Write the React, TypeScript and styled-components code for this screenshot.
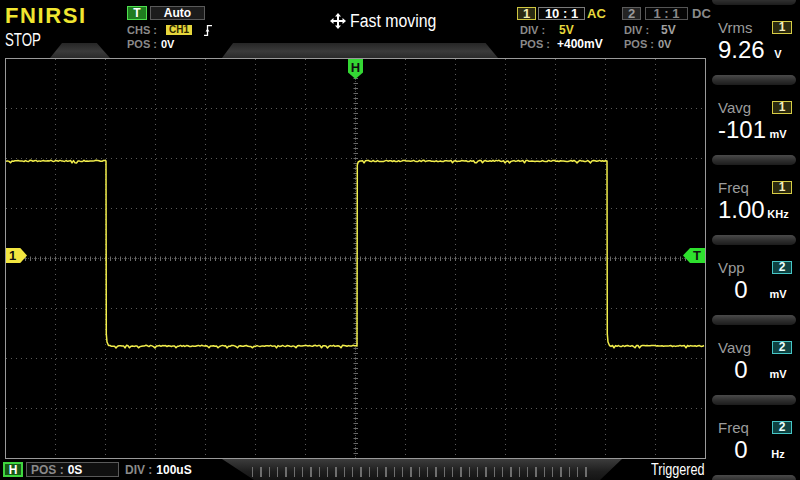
import React from "react";
import styled, { createGlobalStyle } from "styled-components";

const Global = createGlobalStyle`
  html, body { margin: 0; padding: 0; background: #000; }
  body { width: 800px; height: 480px; overflow: hidden; font-family: "Liberation Sans", Arial, sans-serif; }
  * { box-sizing: border-box; }
`;

const Screen = styled.div`
  width: 800px;
  height: 480px;
  display: flex;
  background: #000;
  color: #fff;
  overflow: hidden;
`;

const Main = styled.div`
  width: 711px;
  display: flex;
  flex-direction: column;
`;

/* ---------- header ---------- */
const Header = styled.header`
  position: relative;
  height: 58px;
`;

const Decor = styled.div`
  position: absolute;
  left: 0;
  bottom: 0;
  height: 15px;
  width: 100%;
  display: flex;
  z-index: 0;
`;

const Trap = styled.div<{ $ml: number; $w: number; $clip: string }>`
  margin-left: ${(p) => p.$ml}px;
  width: ${(p) => p.$w}px;
  flex-shrink: 0;
  height: 100%;
  clip-path: ${(p) => p.$clip};
  background: linear-gradient(#262626, #3a3a3a 55%, #2a2a2a);
`;

const HeaderContent = styled.div`
  position: relative;
  z-index: 1;
  height: 58px;
  display: flex;
`;

const Col = styled.div<{ $w: number; $pt: number; $pl?: number }>`
  width: ${(p) => p.$w}px;
  flex-shrink: 0;
  padding-top: ${(p) => p.$pt}px;
  padding-left: ${(p) => p.$pl ?? 0}px;
  display: flex;
  flex-direction: column;
`;

const Logo = styled.div`
  margin-top: 5px;
  font-size: 22px;
  line-height: 22px;
  font-weight: 700;
  letter-spacing: 1.6px;
  color: #f0e630;
`;

const Narrow = styled.span<{ $size: number; $scale: number }>`
  display: inline-block;
  font-size: ${(p) => p.$size}px;
  line-height: ${(p) => p.$size}px;
  transform: scaleX(${(p) => p.$scale});
  transform-origin: left center;
  white-space: nowrap;
  color: #fff;
`;

const StatusLine = styled.div`
  margin-top: 3px;
  height: 19px;
`;

const Row = styled.div<{ $h: number; $mt?: number }>`
  height: ${(p) => p.$h}px;
  margin-top: ${(p) => p.$mt ?? 0}px;
  display: flex;
  align-items: center;
  white-space: nowrap;
`;

const Txt = styled.span<{ $c?: string; $ml?: number; $size?: number; $bold?: boolean }>`
  margin-left: ${(p) => p.$ml ?? 0}px;
  color: ${(p) => p.$c ?? "#fff"};
  font-size: ${(p) => p.$size ?? 11}px;
  font-weight: ${(p) => (p.$bold === false ? 400 : 700)};
  line-height: 1;
  flex-shrink: 0;
`;

const Chip = styled.div<{
  $w: number;
  $h: number;
  $border: string;
  $bg: string;
  $c: string;
  $ml?: number;
  $size?: number;
}>`
  width: ${(p) => p.$w}px;
  height: ${(p) => p.$h}px;
  flex-shrink: 0;
  margin-left: ${(p) => p.$ml ?? 0}px;
  border: 1px solid ${(p) => p.$border};
  background: ${(p) => p.$bg};
  color: ${(p) => p.$c};
  font-size: ${(p) => p.$size ?? 12}px;
  font-weight: 700;
  display: flex;
  align-items: center;
  justify-content: center;
  line-height: 1;
  white-space: pre;
`;

const FilledChip = styled.div`
  margin-left: 9px;
  width: 26px;
  height: 10px;
  background: #e6d63c;
  color: #2e2600;
  font-size: 10px;
  font-weight: 700;
  line-height: 10px;
  text-align: center;
`;

const ModeRow = styled.div`
  display: flex;
  align-items: center;
  gap: 4px;
  height: 20px;
`;

/* ---------- plot ---------- */
const PlotRow = styled.div`
  display: flex;
  padding-left: 5px;
`;

const Plot = styled.div`
  position: relative;
  width: 701px;
  height: 401px;
  border: 1px solid #9a9a9a;
  background: #000;
`;

const PlotSvg = styled.svg`
  display: block;
`;

const Marker = styled.div<{ $left: number; $top: number; $w: number; $h: number; $bg: string; $clip: string; $jc: string; $pad: string; $ai?: string }>`
  position: absolute;
  left: ${(p) => p.$left}px;
  top: ${(p) => p.$top}px;
  width: ${(p) => p.$w}px;
  height: ${(p) => p.$h}px;
  background: ${(p) => p.$bg};
  clip-path: ${(p) => p.$clip};
  display: flex;
  align-items: ${(p) => p.$ai ?? "center"};
  justify-content: ${(p) => p.$jc};
  padding: ${(p) => p.$pad};
  color: #101010;
  font-size: 13px;
  font-weight: 700;
  line-height: 1;
`;

/* ---------- footer ---------- */
const Footer = styled.footer`
  height: 21px;
  display: flex;
  align-items: center;
`;

const FooterInfo = styled.div`
  width: 222px;
  flex-shrink: 0;
  display: flex;
  align-items: center;
`;

const HBadge = styled.div`
  margin-left: 3px;
  width: 20px;
  height: 15px;
  border: 2px solid #3fd63f;
  background: #175a17;
  color: #fff;
  font-size: 12px;
  font-weight: 700;
  display: flex;
  align-items: center;
  justify-content: center;
`;

const PosBox = styled.div`
  margin-left: 3px;
  width: 93px;
  height: 15px;
  border: 1px solid #5a5a5a;
  background: #101010;
  display: flex;
  align-items: center;
  padding-left: 4px;
`;

const Ruler = styled.div`
  width: 400px;
  flex-shrink: 0;
  height: 21px;
  clip-path: polygon(0 0, 100% 0, 94.5% 100%, 8% 100%);
  background: linear-gradient(#3c3c3c, #1e1e1e 60%, #141414);
  padding-top: 8px;
  display: flex;
`;

const Ticks = styled.div`
  margin-left: 30px;
  width: 340px;
  height: 10px;
  background: repeating-linear-gradient(90deg, #6e6e6e 0 1.5px, transparent 1.5px 8.33px);
`;

const TrigStatus = styled.div`
  margin-left: 29px;
  width: 60px;
  flex-shrink: 0;
  height: 21px;
  display: flex;
  align-items: center;
  overflow: visible;
`;

/* ---------- side panel ---------- */
const Side = styled.aside`
  width: 89px;
  height: 480px;
  overflow: hidden;
`;

const SideInner = styled.div`
  margin-top: -5px;
  display: flex;
  flex-direction: column;
`;

const Tab = styled.div`
  height: 10px;
  margin: 0 4px 0 1px;
  border-radius: 5px;
  background: linear-gradient(#4a4a4a, #2e2e2e 55%, #1c1c1c);
`;

const Card = styled.div`
  height: 70px;
  padding: 13px 8px 0 7px;
  display: flex;
  flex-direction: column;
`;

const CardHead = styled.div`
  height: 18px;
  display: flex;
  align-items: center;
  justify-content: space-between;
`;

const MeasLabel = styled.span`
  color: #9c9c9c;
  font-size: 15px;
  line-height: 1;
`;

const ValueRow = styled.div`
  margin-top: 1px;
  height: 26px;
  display: flex;
  align-items: baseline;
`;

const MeasValue = styled.span`
  width: 46px;
  text-align: center;
  font-size: 24px;
  line-height: 26px;
  color: #fff;
  white-space: nowrap;
`;

const MeasUnit = styled.span`
  flex: 1;
  text-align: center;
  font-size: 11px;
  font-weight: 700;
  color: #fff;
`;

/* ---------- drawings ---------- */
const MoveIcon = () => (
  <svg width="16" height="16" viewBox="0 0 16 16">
    <rect x="7" y="2" width="2" height="12" fill="#fff" />
    <rect x="2" y="7" width="12" height="2" fill="#fff" />
    <polygon points="8,0 11,3.5 5,3.5" fill="#fff" />
    <polygon points="8,16 11,12.5 5,12.5" fill="#fff" />
    <polygon points="0,8 3.5,5 3.5,11" fill="#fff" />
    <polygon points="16,8 12.5,5 12.5,11" fill="#fff" />
  </svg>
);

const EdgeIcon = () => (
  <svg width="8" height="11" viewBox="0 0 8 11" style={{ marginLeft: 12 }}>
    <path d="M0 10.5 H3.5 V0.5 H8" stroke="#fff" strokeWidth="1.3" fill="none" />
    <polygon points="1.6,6.5 3.5,3.6 5.4,6.5" fill="#fff" />
  </svg>
);

function rand(i: number) {
  const x = Math.sin(i * 12.9898 + 78.233) * 43758.5453;
  return x - Math.floor(x);
}

const HIGH = 103;
const LOW = 288;

function buildTrace(): string {
  const pts: string[] = [];
  const add = (x: number, y: number) => pts.push(`${x.toFixed(1)},${y.toFixed(1)}`);
  const flat = (x0: number, x1: number, y: number, seed: number) => {
    for (let x = x0; x <= x1; x += 1.5) {
      const r = rand(x * 3.1 + seed);
      const spike = r > 0.93 ? 1.2 : 0;
      add(x, y + (r - 0.5) * 1.4 + spike);
    }
  };
  flat(1, 100, HIGH, 1);
  add(101, HIGH);
  add(101.3, 276);
  add(102, 284);
  add(103.5, 287.5);
  flat(105, 351, LOW, 2);
  add(352, LOW);
  add(352.3, 107);
  add(353.2, 104);
  add(355, HIGH);
  flat(356, 601, HIGH, 3);
  add(602, HIGH);
  add(602.3, 276);
  add(603, 284);
  add(604.5, 287.5);
  flat(606, 699, LOW, 4);
  return pts.join(" ");
}

const Grid = () => {
  const v: number[] = [];
  for (let x = 50; x < 700; x += 50) if (x !== 350) v.push(x);
  const h: number[] = [];
  for (let y = 50; y < 400; y += 50) if (y !== 200) h.push(y);
  const ticksH: number[] = [];
  for (let x = 5; x < 700; x += 5) ticksH.push(x);
  const ticksV: number[] = [];
  for (let y = 5; y < 400; y += 5) ticksV.push(y);
  return (
    <g>
      {v.map((x) => (
        <line key={"v" + x} x1={x + 0.5} y1={1} x2={x + 0.5} y2={400} stroke="#5a5a5a" strokeDasharray="1 4" />
      ))}
      {h.map((y) => (
        <line key={"h" + y} x1={1} y1={y + 0.5} x2={700} y2={y + 0.5} stroke="#5a5a5a" strokeDasharray="1 4" />
      ))}
      <line x1={1} y1={200.5} x2={700} y2={200.5} stroke="#4a4a4a" strokeDasharray="1 1" />
      <line x1={350.5} y1={1} x2={350.5} y2={400} stroke="#4a4a4a" strokeDasharray="1 1" />
      {ticksH.map((x) => (
        <line key={"th" + x} x1={x + 0.5} y1={198.5} x2={x + 0.5} y2={203} stroke="#6a6a6a" />
      ))}
      {ticksV.map((y) => (
        <line key={"tv" + y} x1={348.5} y1={y + 0.5} x2={353} y2={y + 0.5} stroke="#6a6a6a" />
      ))}
    </g>
  );
};

const trace = buildTrace();

type Meas = { label: string; ch: 1 | 2; value: string; unit: string };
const measurements: Meas[] = [
  { label: "Vrms", ch: 1, value: "9.26", unit: "V" },
  { label: "Vavg", ch: 1, value: "-101", unit: "mV" },
  { label: "Freq", ch: 1, value: "1.00", unit: "KHz" },
  { label: "Vpp", ch: 2, value: "0", unit: "mV" },
  { label: "Vavg", ch: 2, value: "0", unit: "mV" },
  { label: "Freq", ch: 2, value: "0", unit: "Hz" },
];

const chStyle = {
  1: { border: "#d6cc44", bg: "#2c2a0e", c: "#f4f0c4" },
  2: { border: "#46c6c6", bg: "#0e4242", c: "#eaffff" },
};

const GRAY = "#8a8a8a";

export default function App() {
  return (
    <>
      <Global />
      <Screen>
        <Main>
          <Header>
            <Decor>
              <Trap $ml={50} $w={60} $clip="polygon(20% 0, 78% 0, 100% 100%, 0 100%)" />
              <Trap $ml={112} $w={276} $clip="polygon(4% 0, 95.5% 0, 100% 100%, 0 100%)" />
            </Decor>
            <HeaderContent>
              <Col $w={127} $pt={0} $pl={5}>
                <Logo>FNIRSI</Logo>
                <StatusLine>
                  <Narrow $size={19} $scale={0.7}>STOP</Narrow>
                </StatusLine>
              </Col>
              <Col $w={203} $pt={6}>
                <Row $h={14}>
                  <Chip $w={20} $h={14} $border="#4ee04e" $bg="#1f7c1f" $c="#fff" $size={12}>T</Chip>
                  <Chip $w={55} $h={14} $border="#5a5a5a" $bg="#1c1c1c" $c="#fff" $ml={3} $size={12}>Auto</Chip>
                </Row>
                <Row $h={14} $mt={3}>
                  <Txt $c={GRAY}>CHS :</Txt>
                  <FilledChip>CH1</FilledChip>
                  <EdgeIcon />
                </Row>
                <Row $h={14}>
                  <Txt $c={GRAY}>POS :</Txt>
                  <Txt $ml={4}>0V</Txt>
                </Row>
              </Col>
              <Col $w={187} $pt={11}>
                <ModeRow>
                  <MoveIcon />
                  <Narrow $size={18} $scale={0.88}>Fast moving</Narrow>
                </ModeRow>
              </Col>
              <Col $w={105} $pt={7}>
                <Row $h={13}>
                  <Chip $w={19} $h={13} $border="#cfc640" $bg="#2a2a12" $c="#f2eeb4" $size={13}>1</Chip>
                  <Chip $w={47} $h={13} $border="#7a7a7a" $bg="#060606" $c="#fff" $ml={2} $size={13}>{"10 : 1"}</Chip>
                  <Txt $c="#e6d83c" $ml={2} $size={13}>AC</Txt>
                </Row>
                <Row $h={14} $mt={3}>
                  <Txt $c={GRAY} $ml={3}>DIV :</Txt>
                  <Txt $c="#e6d83c" $ml={14} $size={12}>5V</Txt>
                </Row>
                <Row $h={14}>
                  <Txt $c={GRAY} $ml={3}>POS :</Txt>
                  <Txt $ml={7} $size={12}>+400mV</Txt>
                </Row>
              </Col>
              <Col $w={89} $pt={7}>
                <Row $h={13}>
                  <Chip $w={19} $h={13} $border="#5c5c5c" $bg="#242424" $c="#9a9a9a" $size={13}>2</Chip>
                  <Chip $w={43} $h={13} $border="#555" $bg="#060606" $c="#8a8a8a" $ml={4} $size={13}>{"1 : 1"}</Chip>
                  <Txt $c="#8a8a8a" $ml={4} $size={13}>DC</Txt>
                </Row>
                <Row $h={14} $mt={3}>
                  <Txt $c={GRAY} $ml={2}>DIV :</Txt>
                  <Txt $c="#a0a0a0" $ml={12} $size={12}>5V</Txt>
                </Row>
                <Row $h={14}>
                  <Txt $c={GRAY} $ml={2}>POS :</Txt>
                  <Txt $c="#a0a0a0" $ml={4}>0V</Txt>
                </Row>
              </Col>
            </HeaderContent>
          </Header>

          <PlotRow>
            <Plot>
              <PlotSvg width={699} height={399} viewBox="1 1 699 399">
                <Grid />
                <polyline points={trace} fill="none" stroke="#f2ee4c" strokeWidth={1.5} strokeLinejoin="round" />
              </PlotSvg>
              <Marker
                $left={0}
                $top={189}
                $w={21}
                $h={15}
                $bg="#f2e640"
                $clip="polygon(0 0, 68% 0, 100% 50%, 68% 100%, 0 100%)"
                $jc="flex-start"
                $pad="0 0 0 3px"
              >
                1
              </Marker>
              <Marker
                $left={677}
                $top={189}
                $w={22}
                $h={15}
                $bg="#2ee02e"
                $clip="polygon(0 50%, 32% 0, 100% 0, 100% 100%, 32% 100%)"
                $jc="flex-end"
                $pad="0 4px 0 0"
              >
                T
              </Marker>
              <Marker
                $left={342}
                $top={0}
                $w={15}
                $h={20}
                $bg="#34d834"
                $clip="polygon(0 0, 100% 0, 100% 68%, 50% 100%, 0 68%)"
                $jc="center"
                $ai="flex-start"
                $pad="2px 0 0 0"
              >
                H
              </Marker>
            </Plot>
          </PlotRow>

          <Footer>
            <FooterInfo>
              <HBadge>H</HBadge>
              <PosBox>
                <Txt $c={GRAY} $size={12}>POS :</Txt>
                <Txt $ml={4} $size={12}>0S</Txt>
              </PosBox>
              <Txt $c={GRAY} $ml={6} $size={12}>DIV :</Txt>
              <Txt $ml={4} $size={12}>100uS</Txt>
            </FooterInfo>
            <Ruler>
              <Ticks />
            </Ruler>
            <TrigStatus>
              <Narrow $size={16} $scale={0.79}>Triggered</Narrow>
            </TrigStatus>
          </Footer>
        </Main>

        <Side>
          <SideInner>
            {measurements.map((m, i) => {
              const s = chStyle[m.ch];
              return (
                <React.Fragment key={i}>
                  <Tab />
                  <Card>
                    <CardHead>
                      <MeasLabel>{m.label}</MeasLabel>
                      <Chip $w={20} $h={13} $border={s.border} $bg={s.bg} $c={s.c} $size={12}>
                        {m.ch}
                      </Chip>
                    </CardHead>
                    <ValueRow>
                      <MeasValue>{m.value}</MeasValue>
                      <MeasUnit>{m.unit}</MeasUnit>
                    </ValueRow>
                  </Card>
                </React.Fragment>
              );
            })}
            <Tab />
          </SideInner>
        </Side>
      </Screen>
    </>
  );
}
